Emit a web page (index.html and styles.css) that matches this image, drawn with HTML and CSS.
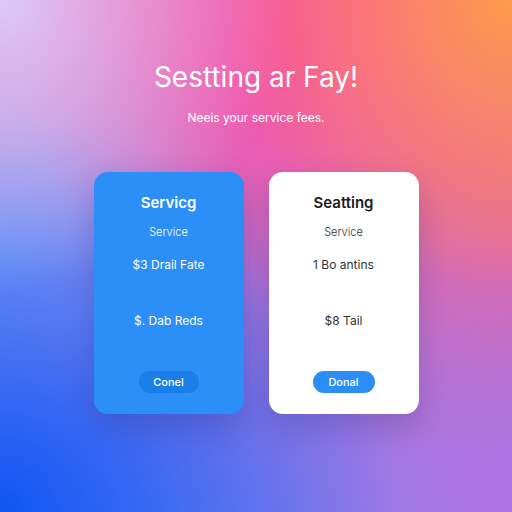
FILE: index.html
```html
<!DOCTYPE html>
<html lang="en">
<head>
    <meta charset="UTF-8">
    <meta name="viewport" content="width=device-width, initial-scale=1.0">
    <title>Service Fees</title>
    <link rel="stylesheet" href="styles.css">
</head>
<body>
    <div class="page">
        <h1 class="headline">Sestting ar Fay!</h1>
        <p class="lead">Neeis your service fees.</p>

        <div class="plans">
            <div class="plan plan-blue">
                <h2 class="plan-title">Servicg</h2>
                <div class="plan-label">Service</div>
                <div class="plan-line">$3 Drail Fate</div>
                <div class="plan-line plan-line-low">$. Dab Reds</div>
                <a href="#" class="plan-btn">Conel</a>
            </div>
            <div class="plan plan-white">
                <h2 class="plan-title">Seatting</h2>
                <div class="plan-label">Service</div>
                <div class="plan-line">1 Bo antins</div>
                <div class="plan-line plan-line-low">$8 Tail</div>
                <a href="#" class="plan-btn">Donal</a>
            </div>
        </div>
    </div>
</body>
</html>
```

FILE: styles.css
```css
* {
    margin: 0;
    padding: 0;
    box-sizing: border-box;
    font-family: Inter, 'Liberation Sans', sans-serif;
}

html, body {
    height: 100%;
}

body {
    background-color: #c070d8;
    background-image:
        radial-gradient(circle at 0% 0%, #dccaf8 0%, rgba(220, 202, 248, 0) 40%),
        radial-gradient(circle at 100% 0%, #ff9a4a 0%, rgba(255, 154, 74, 0) 40%),
        radial-gradient(circle at 55% 5%, #f74ea4 0%, rgba(247, 78, 164, 0) 50%),
        radial-gradient(circle at 0% 100%, #0f56f5 0%, rgba(15, 86, 245, 0) 55%),
        radial-gradient(circle at 100% 100%, #b070e0 0%, rgba(176, 112, 224, 0) 50%),
        radial-gradient(circle at 0% 50%, #8aa8f8 0%, rgba(138, 168, 248, 0) 45%),
        radial-gradient(circle at 100% 45%, #f4648e 0%, rgba(244, 100, 142, 0) 45%),
        linear-gradient(180deg, #f060a8 0%, #c07ad8 55%, #7a8af0 100%);
}

.page {
    display: flex;
    flex-direction: column;
    align-items: center;
    padding-top: 60px;
    color: #fff;
}

.headline {
    font-size: 28px;
    font-weight: 400;
    line-height: 34px;
    letter-spacing: 0;
}

.lead {
    font-size: 12px;
    line-height: 16px;
    margin-top: 16px;
}

.plans {
    display: flex;
    gap: 25px;
    margin-top: 46px;
}

.plan {
    width: 150px;
    height: 242px;
    border-radius: 14px;
    display: flex;
    flex-direction: column;
    align-items: center;
    padding-top: 21px;
    box-shadow: 0 14px 30px rgba(40, 40, 120, 0.25);
}

.plan-blue {
    background-color: #2c8ff8;
    color: #fff;
}

.plan-white {
    background-color: #fff;
    color: #333;
}

.plan-title {
    font-size: 15px;
    font-weight: 600;
    line-height: 20px;
}

.plan-white .plan-title {
    color: #1c1c1c;
}

.plan-label {
    font-size: 11px;
    line-height: 14px;
    margin-top: 12px;
    font-weight: 300;
}

.plan-line {
    font-size: 12px;
    line-height: 16px;
    margin-top: 18px;
}

.plan-line-low {
    margin-top: 40px;
}

.plan-btn {
    margin-top: 42px;
    display: inline-flex;
    align-items: center;
    justify-content: center;
    height: 22px;
    padding: 0 16px;
    border-radius: 11px;
    font-size: 11px;
    font-weight: 500;
    color: #fff;
    text-decoration: none;
}

.plan-blue .plan-btn {
    background-color: #1a7ee8;
    width: 60px;
}

.plan-white .plan-btn {
    background-color: #2a8ef6;
    width: 62px;
}
```
